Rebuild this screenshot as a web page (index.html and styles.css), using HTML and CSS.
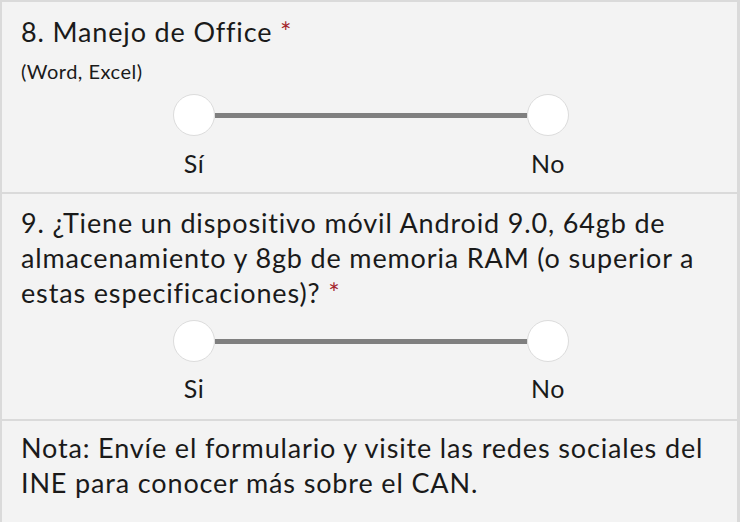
FILE: index.html
```html
<!DOCTYPE html>
<html lang="es">
<head>
<meta charset="utf-8">
<link rel="stylesheet" href="styles.css">
</head>
<body>
<div class="form">
  <section class="card q8">
    <h2 class="title">8. Manejo de Office <span class="req">*</span></h2>
    <p class="sub">(Word, Excel)</p>
    <div class="slider">
      <div class="track">
        <span class="knob"></span>
        <span class="bar"></span>
        <span class="knob"></span>
      </div>
      <div class="labels"><span>Sí</span><span>No</span></div>
    </div>
  </section>
  <section class="card q9">
    <h2 class="title">9. ¿Tiene un dispositivo móvil Android 9.0, 64gb de almacenamiento y 8gb de memoria RAM (o superior a estas especificaciones)? <span class="req">*</span></h2>
    <div class="slider">
      <div class="track">
        <span class="knob"></span>
        <span class="bar"></span>
        <span class="knob"></span>
      </div>
      <div class="labels"><span>Si</span><span>No</span></div>
    </div>
  </section>
  <section class="card note">
    <p class="title">Nota: Envíe el formulario y visite las redes sociales del INE para conocer más sobre el CAN.</p>
  </section>
</div>
</body>
</html>
```
FILE: styles.css
```css
html, body {
  margin: 0;
  padding: 0;
  background: #f3f3f3;
}
body {
  font-family: Lato, "Noto Sans", sans-serif;
  font-variant-ligatures: none;
  color: #1a1a1a;
  width: 740px;
  height: 522px;
  overflow: hidden;
}
.form {
  border-top: 2px solid #dadada;
  border-left: 2px solid #dadada;
  border-right: 3px solid #dadada;
  box-sizing: border-box;
  width: 740px;
}
.card {
  background: #f3f3f3;
  border-bottom: 2px solid #dadada;
  padding: 0 16px 0 19px;
  box-sizing: content-box;
}
.q8 { height: 178px; padding-top: 12px; }
.q9 { height: 214px; padding-top: 11px; }
.note { height: 92px; padding-top: 9px; border-bottom: none; }
.title {
  margin: 0;
  font-weight: 400;
  font-size: 27px;
  letter-spacing: 0.85px;
  line-height: 35px;
  color: #1a1a1a;
}
.req { color: #a4262c; }
.sub {
  margin: 9px 0 0;
  font-size: 20px;
  letter-spacing: 0.5px;
  line-height: 26px;
}
.slider {
  width: 396px;
  margin: 10px auto 0;
}
.track {
  display: flex;
  align-items: center;
  height: 42px;
}
.knob {
  width: 40px;
  height: 40px;
  border-radius: 50%;
  background: #fff;
  border: 1px solid #dcdcdc;
  flex: none;
}
.bar {
  flex: 1;
  height: 5px;
  background: #7f7f7f;
}
.labels {
  display: flex;
  justify-content: space-between;
  margin-top: 12px;
  font-size: 25px;
  letter-spacing: 0.5px;
  line-height: 30px;
}
.q9 .labels { margin-top: 11px; }
.labels span {
  width: 42px;
  text-align: center;
}
```
